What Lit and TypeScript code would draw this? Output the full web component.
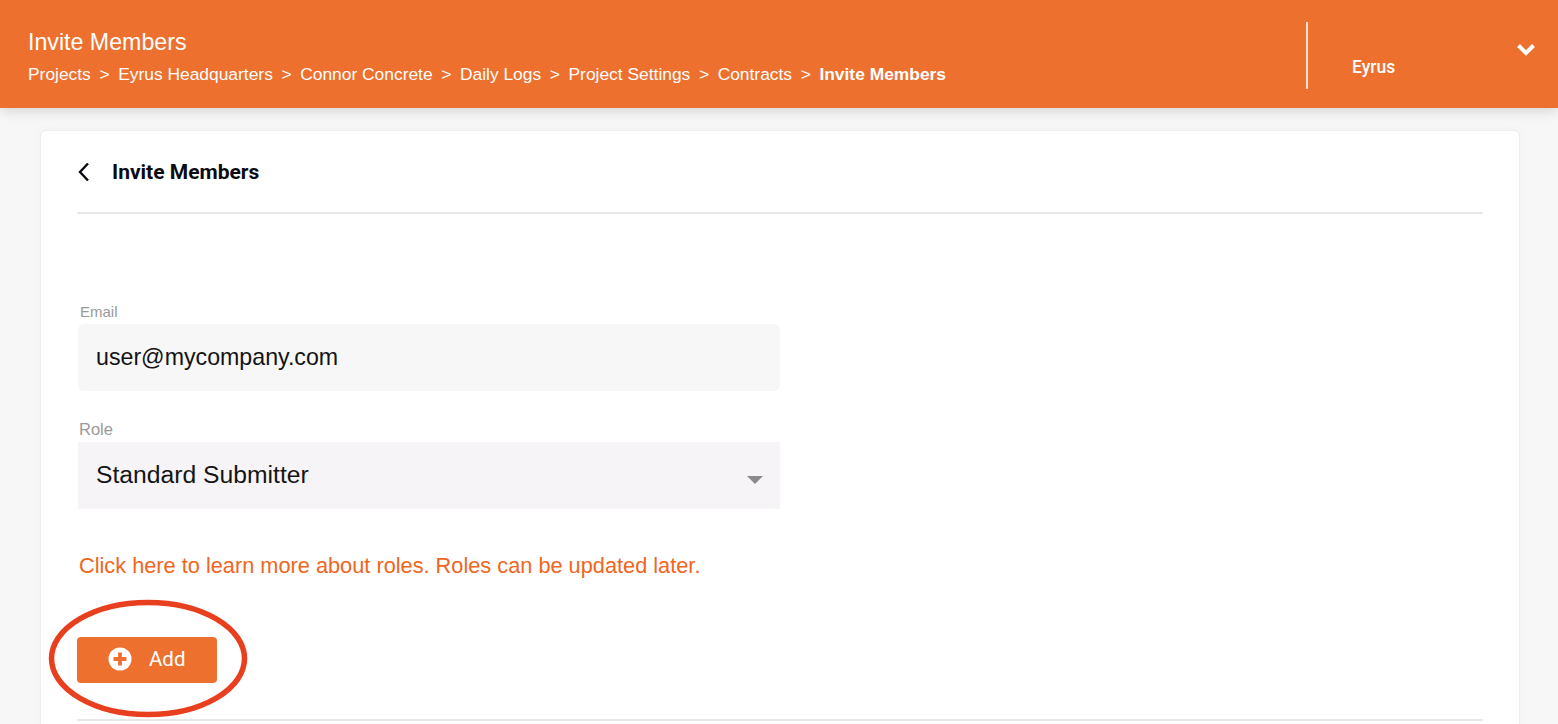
import { LitElement, html, css } from "lit";
import { customElement } from "lit/decorators.js";

const crumbs = ["Projects", "Eyrus Headquarters", "Connor Concrete", "Daily Logs", "Project Settings", "Contracts"];

@customElement("app-root")
export class AppRoot extends LitElement {
  static styles = css`
    :host {
      display: block;
      position: relative;
      width: 1558px;
      height: 724px;
      overflow: hidden;
      background: #f7f7f7;
      font-family: "Liberation Sans", Arial, sans-serif;
    }
    .header {
      position: relative;
      z-index: 1;
      height: 108px;
      box-sizing: border-box;
      background: #ed702e;
      color: #fff;
      display: flex;
      justify-content: space-between;
      padding: 22px 0 0 28px;
      box-shadow: 0 3px 12px rgba(0, 0, 0, 0.14);
    }
    .titles {
      display: flex;
      flex-direction: column;
      gap: 9px;
      padding-top: 7px;
    }
    .page-title {
      font-size: 23.2px;
      line-height: 26px;
    }
    .crumbs {
      display: flex;
      font-size: 17.4px;
      line-height: 20px;
      gap: 8.6px;
    }
    .crumbs b {
      font-weight: 700;
    }
    .user {
      width: 252px;
      height: 67px;
      box-sizing: border-box;
      border-left: 2px solid #fbe3d6;
      display: flex;
      justify-content: space-between;
      padding: 19px 22px 0 44px;
    }
    .user span {
      font-family: Roboto, sans-serif;
      font-weight: 500;
      font-size: 17.5px;
      line-height: 50px;
      height: 50px;
      margin-top: 1px;
    }
    .chev {
      width: 20px;
      height: 14px;
      margin-top: 1px;
    }
    .card {
      position: absolute;
      left: 40px;
      top: 130px;
      width: 1480px;
      height: 640px;
      box-sizing: border-box;
      background: #fff;
      border-radius: 6px;
      border: 1px solid #eeeeee;
      box-shadow: 0 0 14px rgba(0, 0, 0, 0.025);
      padding: 0 36px;
    }
    .card-head {
      height: 81px;
      display: flex;
      align-items: center;
      gap: 21px;
      border-bottom: 2px solid #e8e8e8;
    }
    .back {
      width: 14px;
      height: 20px;
      flex: none;
    }
    .card-title {
      font-family: Roboto, sans-serif;
      font-weight: 700;
      font-size: 21px;
      color: #0b0b12;
    }
    .form {
      width: 702px;
      margin-left: 1px;
      display: flex;
      flex-direction: column;
      padding-top: 89px;
    }
    label {
      line-height: 18px;
      color: #999999;
    }
    .email-label {
      font-size: 15px;
      padding-left: 2px;
      margin-bottom: 3px;
    }
    .role-label {
      font-size: 16.5px;
      padding-left: 1px;
      margin-bottom: 4px;
    }
    .field {
      height: 67px;
      box-sizing: border-box;
      padding: 0 18px;
      display: flex;
      align-items: center;
      justify-content: space-between;
      font-size: 23.2px;
      color: #141414;
      background: #f7f7f7;
      border-radius: 6px;
      margin-bottom: 29px;
    }
    .select {
      font-size: 24.7px;
      padding-bottom: 2px;
      background: #f6f4f6;
      border-radius: 0;
      margin-bottom: 43px;
    }
    .caret {
      width: 0;
      height: 0;
      margin-right: -1px;
      margin-top: 10px;
      border-left: 8px solid transparent;
      border-right: 8px solid transparent;
      border-top: 8px solid #8a8a8a;
    }
    .learn {
      font-size: 21.75px;
      line-height: 28px;
      padding-left: 1px;
      white-space: nowrap;
      color: #f0661e;
      margin-bottom: 57px;
    }
    .add {
      width: 140px;
      height: 46px;
      margin-left: -1px;
      box-sizing: border-box;
      background: #ed702e;
      border-radius: 4px;
      color: #fff;
      display: flex;
      align-items: center;
      gap: 17px;
      padding: 0 0 2px 31px;
      font-family: Roboto, sans-serif;
      font-size: 20.5px;
    }
    .add span {
      margin-bottom: 1px;
    }
    .plus {
      width: 24px;
      height: 24px;
      flex: none;
    }
    .foot {
      height: 2px;
      margin-top: 36px;
      background: #e8e8e8;
      width: 1406px;
    }
    .annot {
      position: absolute;
      z-index: 2;
      left: 48px;
      top: 599px;
      width: 200px;
      height: 120px;
      pointer-events: none;
    }
  `;

  render() {
    return html`
      <div class="header">
        <div class="titles">
          <div class="page-title">Invite Members</div>
          <div class="crumbs">
            ${crumbs.map((c) => html`<span>${c}</span><span>&gt;</span>`)}
            <b>Invite Members</b>
          </div>
        </div>
        <div class="user">
          <span>Eyrus</span>
          <svg class="chev" viewBox="0 0 20 14">
            <path d="M2.5 3.5 L10 11 L17.5 3.5" fill="none" stroke="#fff" stroke-width="4" />
          </svg>
        </div>
      </div>
      <div class="card">
        <div class="card-head">
          <svg class="back" viewBox="0 0 14 20">
            <path d="M11 1.5 L3 10 L11 18.5" fill="none" stroke="#0b0b12" stroke-width="2.4" />
          </svg>
          <div class="card-title">Invite Members</div>
        </div>
        <div class="form">
          <label class="email-label">Email</label>
          <div class="field">user@mycompany.com</div>
          <label class="role-label">Role</label>
          <div class="field select">Standard Submitter<span class="caret"></span></div>
          <div class="learn">Click here to learn more about roles. Roles can be updated later.</div>
          <div class="add">
            <svg class="plus" viewBox="0 0 24 24">
              <circle cx="12" cy="12" r="11.5" fill="#fff" />
              <path d="M12 5.5 V18.5 M5.5 12 H18.5" stroke="#ed702e" stroke-width="3.8" />
            </svg>
            <span>Add</span>
          </div>
        </div>
        <div class="foot"></div>
      </div>
      <svg class="annot" viewBox="0 0 200 120">
        <ellipse cx="100" cy="59.5" rx="96.5" ry="56" fill="none" stroke="#e8401f" stroke-width="5.5" />
      </svg>
    `;
  }
}
